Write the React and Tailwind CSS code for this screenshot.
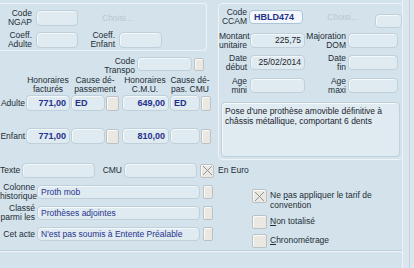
import React from 'react';

const field = 'rounded-[4px] border border-[#bfd0db] bg-[#dfeaf1] shadow-[inset_1px_1px_0_#f3f8fa] flex items-center px-[3px] shrink-0';
const btn = 'rounded-[2px] border border-[#b8c2c8] bg-[#ebe8e1] shadow-[inset_1px_1px_0_#fbfaf7] shrink-0';

function Label({ w, children, className = '' }) {
  return (
    <div className={`shrink-0 text-right leading-[9px] ${className}`} style={{ width: w }}>
      {children}
    </div>
  );
}

function Cross({ className = '' }) {
  return (
    <div className={`${btn} flex items-center justify-center ${className}`}>
      <svg width="11" height="11" viewBox="0 0 11 11">
        <path d="M1 1 L10 10 M10 1 L1 10" stroke="#8e9499" strokeWidth="1" fill="none" />
      </svg>
    </div>
  );
}

function AmountRow({ label, a, b, c, d, className = '' }) {
  return (
    <div className={`flex items-center h-[16px] ${className}`}>
      <Label w="25px">{label}</Label>
      <div className={`${field} w-[44px] h-[16px] ml-[1px] justify-end font-bold text-[9px] text-[#24308c]`}>{a}</div>
      <div className={`${field} w-[34px] h-[16px] ml-[1px] font-bold text-[9px] text-[#24308c]`}>{b}</div>
      <div className={`${btn} w-[13px] h-[15px] ml-[1px]`} />
      <div className={`${field} w-[47px] h-[16px] ml-[3px] justify-end font-bold text-[9px] text-[#24308c]`}>{c}</div>
      <div className={`${field} w-[30px] h-[16px] ml-[1px] font-bold text-[9px] text-[#24308c]`}>{d}</div>
      <div className={`${btn} w-[10px] h-[15px] ml-[1px]`} />
    </div>
  );
}

function ListRow({ top, bottom, value, className = '' }) {
  return (
    <div className={`flex items-center h-[14px] ${className}`}>
      <Label w="35px">{top}{bottom && <br />}{bottom}</Label>
      <div className={`${field} w-[163px] h-[14px] ml-[2px] text-[#27348c]`}>{value}</div>
      <div className={`${btn} w-[10px] h-[14px] ml-[3px]`} />
    </div>
  );
}

function CheckRow({ checked, children, className = '' }) {
  return (
    <div className={`flex items-start ${className}`}>
      {checked ? <Cross className="w-[15px] h-[14px]" /> : <div className={`${btn} w-[15px] h-[14px]`} />}
      <div className="ml-[3px] pt-[1px] leading-[10px]">{children}</div>
    </div>
  );
}

function DateRow({ l1, l2, v1, r1, r2, className = '' }) {
  return (
    <div className={`flex items-center h-[15px] ${className}`}>
      <Label w="28px">{l1}<br />{l2}</Label>
      <div className={`${field} w-[55px] h-[15px] ml-[3px] justify-end text-[#1d242b]`}>{v1}</div>
      <Label w="41px">{r1}<br />{r2}</Label>
      <div className={`${field} w-[50px] h-[15px] ml-[2px]`} />
    </div>
  );
}

export default function App() {
  return (
    <div className="w-[414px] h-[268px] overflow-hidden bg-[#d4e2eb] flex font-['Liberation_Sans',Arial,sans-serif] text-[8.5px] leading-[9px] text-[#232d35]">
      <div className="w-[403px] shrink-0 flex flex-col border-r border-[#eef4f8]">
        {/* top section */}
        <div className="h-[160px] flex pt-[3px] shrink-0">
          <div className="w-[212px] shrink-0 flex flex-col">
            <div className="w-[207px] h-[48px] border border-l-0 border-[#edf3f7] rounded-r-[4px] pt-[6px] flex flex-col">
              <div className="flex items-center h-[16px]">
                <Label w="32px">Code<br />NGAP</Label>
                <div className={`${field} w-[42px] h-[16px] ml-[4px]`} />
                <span className="ml-[24px] text-[#bac7d0]">Choisi...</span>
              </div>
              <div className="flex items-center h-[16px] mt-[6px]">
                <Label w="32px">Coeff.<br />Adulte</Label>
                <div className={`${field} w-[42px] h-[16px] ml-[4px]`} />
                <Label w="37px">Coeff.<br />Enfant</Label>
                <div className={`${field} w-[43px] h-[16px] ml-[4px]`} />
              </div>
            </div>
            <div className="flex items-center h-[14px] mt-[6px]">
              <Label w="135px" className="pt-[3px]">Code<br />Transpo</Label>
              <div className={`${field} w-[55px] h-[14px] ml-[2px]`} />
              <div className={`${btn} w-[10px] h-[13px] ml-[2px]`} />
            </div>
            <div className="flex mt-[5px] h-[18px] leading-[9px] text-center">
              <div className="w-[26px]" />
              <div className="w-[44px]">Honoraires<br />facturés</div>
              <div className="w-[50px]">Cause dé-<br />passement</div>
              <div className="w-[50px]">Honoraires<br />C.M.U.</div>
              <div className="w-[40px]">Cause dé-<br />pas. CMU</div>
            </div>
            <AmountRow className="mt-[1px]" label="Adulte" a="771,00" b="ED" c="649,00" d="ED" />
            <AmountRow className="mt-[17px]" label="Enfant" a="771,00" b="" c="810,00" d="" />
          </div>

          <div className="ml-[6px] w-[185px] h-[157px] border border-[#edf3f7] rounded-[4px] flex flex-col pt-[6px]">
            <div className="flex items-center h-[14px]">
              <Label w="28px">Code<br />CCAM</Label>
              <div className="ml-[2px] w-[57px] h-[14px] rounded-[4px] border border-[#adc3d8] bg-[#f4f8fc] flex items-center px-[4px] font-bold text-[9px] text-[#24308c]">HBLD474</div>
              <span className="ml-[24px] text-[#bac7d0]">Choisi...</span>
              <div className={`${field} w-[27px] h-[14px] ml-[17px] mt-[8px]`} />
            </div>
            <DateRow className="mt-[9px]" l1="Montant" l2="unitaire" v1="225,75" r1="Majoration" r2="DOM" />
            <DateRow className="mt-[7px]" l1="Date" l2="début" v1="25/02/2014" r1="Date" r2="fin" />
            <DateRow className="mt-[8px]" l1="Age" l2="mini" v1="" r1="Age" r2="maxi" />
            <div className={`${field} !items-start ml-[2px] mt-[9px] w-[179px] h-[55px] pt-[3px] leading-[10px] text-[#1d242b]`}>
              Pose d'une prothèse amovible définitive à<br />châssis métallique, comportant 6 dents
            </div>
          </div>
        </div>

        {/* Texte row */}
        <div className="flex items-center h-[15px] mt-[3px]">
          <Label w="20px">Texte</Label>
          <div className={`${field} w-[73px] h-[15px] ml-[2px]`} />
          <Label w="27px">CMU</Label>
          <div className={`${field} w-[73px] h-[15px] ml-[2px]`} />
          <Cross className="w-[14px] h-[14px] ml-[3px]" />
          <span className="ml-[4px]">En Euro</span>
        </div>

        {/* lists and checks */}
        <div className="flex h-[70px]">
          <div className="w-[213px] shrink-0 flex flex-col pt-[7px]">
            <ListRow top="Colonne" bottom="historique" value="Proth mob" />
            <ListRow className="mt-[7px]" top="Classé" bottom="parmi les" value="Prothèses adjointes" />
            <ListRow className="mt-[7px]" top="Cet acte" value="N'est pas soumis à Entente Préalable" />
          </div>
          <div className="ml-[39px] flex flex-col pt-[11px]">
            <CheckRow checked>Ne <span className="underline">p</span>as appliquer le tarif de<br />convention</CheckRow>
            <CheckRow className="mt-[5px]"><span className="underline">N</span>on totalisé</CheckRow>
            <CheckRow className="mt-[5px]"><span className="underline">C</span>hronométrage</CheckRow>
          </div>
        </div>

        <div className="mt-[2px] border-t border-[#bccdd8] shadow-[0_1px_0_#eef4f8]" />
      </div>
      <div className="w-[7px] shrink-0 bg-[#d9e6ee] border-r border-[#c3d3de]" />
      <div className="flex-1 bg-[#dbe7ef]" />
    </div>
  );
}
